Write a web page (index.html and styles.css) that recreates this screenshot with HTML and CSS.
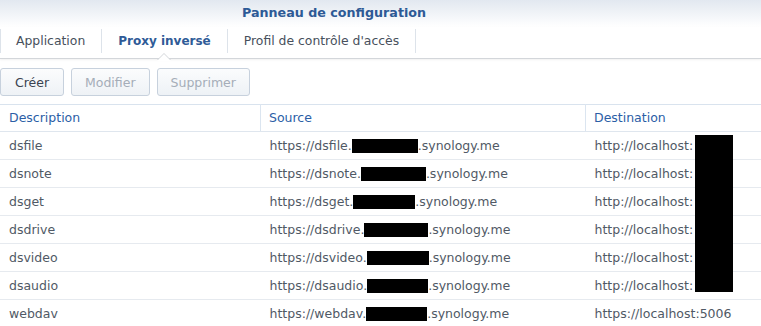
FILE: index.html
```html
<!DOCTYPE html>
<html lang="fr">
<head>
    <meta charset="UTF-8">
    <title>Panneau de configuration</title>
    <link rel="stylesheet" href="styles.css">
</head>
<body>
    <div class="header">
        <span class="title">Panneau de configuration</span>
    </div>

    <div class="tabs">
        <div class="tab">Application</div>
        <div class="tab active">Proxy inversé</div>
        <div class="tab">Profil de contrôle d'accès</div>
    </div>

    <div class="toolbar">
        <button class="btn">Créer</button>
        <button class="btn" disabled>Modifier</button>
        <button class="btn" disabled>Supprimer</button>
    </div>

    <table class="grid">
        <thead>
            <tr>
                <th class="col-desc">Description</th>
                <th class="col-src">Source</th>
                <th class="col-dest">Destination</th>
            </tr>
        </thead>
        <tbody>
            <tr>
                <td>dsfile</td>
                <td>https://dsfile.<span class="mask" style="width:66px"></span>.synology.me</td>
                <td>http://localhost:<span class="mask-tall"></span></td>
            </tr>
            <tr>
                <td>dsnote</td>
                <td>https://dsnote.<span class="mask" style="width:65px"></span>.synology.me</td>
                <td>http://localhost:</td>
            </tr>
            <tr>
                <td>dsget</td>
                <td>https://dsget.<span class="mask" style="width:62px"></span>.synology.me</td>
                <td>http://localhost:</td>
            </tr>
            <tr>
                <td>dsdrive</td>
                <td>https://dsdrive.<span class="mask" style="width:64px"></span>.synology.me</td>
                <td>http://localhost:</td>
            </tr>
            <tr>
                <td>dsvideo</td>
                <td>https://dsvideo.<span class="mask" style="width:62px"></span>.synology.me</td>
                <td>http://localhost:</td>
            </tr>
            <tr>
                <td>dsaudio</td>
                <td>https://dsaudio.<span class="mask" style="width:61px"></span>.synology.me</td>
                <td>http://localhost:</td>
            </tr>
            <tr>
                <td>webdav</td>
                <td>https://webdav.<span class="mask" style="width:61px"></span>.synology.me</td>
                <td>https://localhost:5006</td>
            </tr>
        </tbody>
    </table>
</body>
</html>
```

FILE: styles.css
```css
body {
    margin: 0;
    font-family: "DejaVu Sans", Verdana, sans-serif;
    background-color: #fff;
    color: #505965;
    overflow: hidden;
}

.header {
    height: 27px;
    padding-left: 242px;
    background: linear-gradient(#e2e8f0, #fff);
}

.title {
    display: inline-block;
    line-height: 26px;
    font-size: 12.7px;
    font-weight: bold;
    color: #2d5a96;
}

.tabs {
    display: flex;
    height: 32px;
    padding-top: 2px;
    box-sizing: border-box;
    border-bottom: 1px solid #d3d6da;
    box-shadow: 0 1px 2px rgba(0, 0, 0, 0.06);
    position: relative;
}

.tab {
    height: 24px;
    line-height: 24px;
    padding: 0 16px;
    font-size: 12.4px;
    color: #47505c;
    border-right: 1px solid #dde3ea;
    position: relative;
}

.tab:first-child {
    border-left: 1px solid #dde3ea;
    padding-left: 15px;
}

.tab.active {
    font-size: 12px;
    font-weight: bold;
    color: #2f5b97;
}

/* little notch under the active tab */
.tab.active::before,
.tab.active::after {
    content: "";
    position: absolute;
    left: 50%;
    bottom: -7px;
    margin-left: -7px;
    border: 7px solid transparent;
    border-top: none;
    border-bottom: 7px solid #d3d6da;
}

.tab.active::after {
    bottom: -8px;
    border-bottom-color: #fff;
}

.toolbar {
    display: flex;
    gap: 7px;
    padding: 8px 0;
    margin-top: 1px;
}

.btn {
    height: 28px;
    min-width: 64px;
    padding: 0 13px;
    font-family: "DejaVu Sans", Verdana, sans-serif;
    font-size: 12.5px;
    color: #3a4350;
    background: linear-gradient(#fbfcfd, #eef2f6);
    border: 1px solid #c7d1dd;
    border-radius: 3px;
    cursor: pointer;
}

.btn:disabled {
    color: #a5adb8;
    cursor: default;
}

.grid {
    width: 100%;
    border-collapse: collapse;
    font-size: 12.5px;
    border-top: 1px solid #d9e3ee;
}

.grid th {
    text-align: left;
    font-weight: normal;
    color: #2b5ea6;
    line-height: 26px;
    padding: 0 8px 0 9px;
    border-bottom: 1px solid #dfe6ee;
}

.grid th + th {
    border-left: 1px solid #dbe5f0;
    padding-left: 8px;
}

.col-desc {
    width: 243px;
}

.col-src {
    width: 308px;
}

.grid td {
    line-height: 27px;
    padding: 0 8px 0 9px;
    white-space: nowrap;
    border-bottom: 1px solid #e6eaef;
}

.grid td + td {
    padding-left: 9px;
}

.mask {
    display: inline-block;
    height: 14px;
    vertical-align: -3px;
    background-color: #000;
}

.mask-tall {
    position: absolute;
    width: 38px;
    height: 157px;
    margin-top: 3px;
    margin-left: 2px;
    background-color: #000;
}
```
